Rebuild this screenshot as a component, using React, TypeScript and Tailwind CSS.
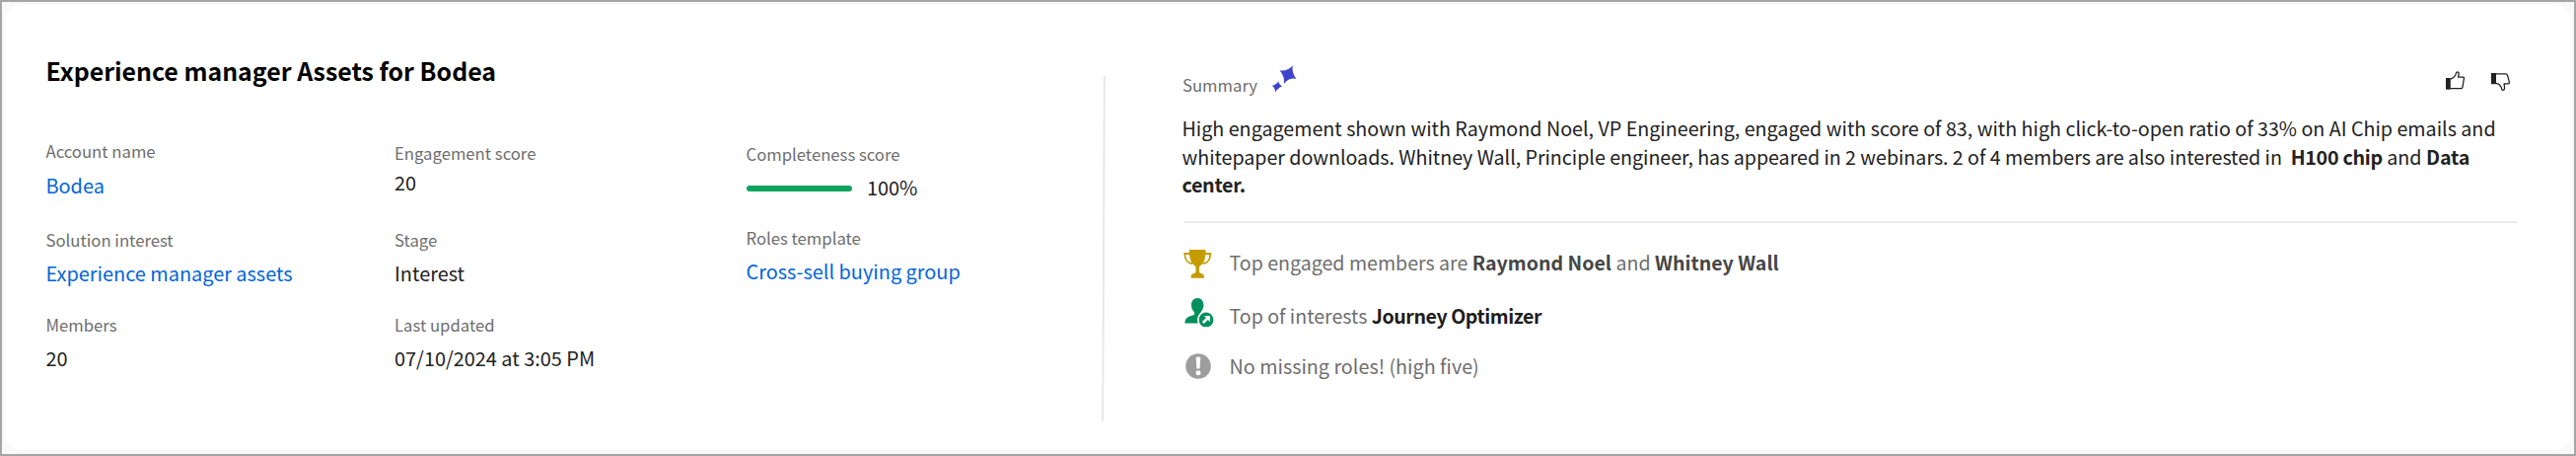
import type { ReactNode } from "react";

type FieldProps = {
  label: string;
  className?: string;
  gap?: string;
  link?: boolean;
  children: ReactNode;
};

function Field({ label, className = "", gap = "mt-3", link = false, children }: FieldProps) {
  return (
    <div className={`flex flex-col ${className}`}>
      <dt className="text-[16.7px] leading-5 text-[#6e6e6e]">{label}</dt>
      <dd className={`text-[19.9px] leading-6 ${gap} ${link ? "text-[#0265dc]" : "text-[#222222]"}`}>
        {children}
      </dd>
    </div>
  );
}

function SparkleIcon() {
  return (
    <svg width="28" height="30" viewBox="0 0 28 30" fill="#3e44cc" aria-hidden="true">
      <path d="M22.8 1.5Q21.4 8.4 26.5 14.9Q19 13.4 13.9 19.9Q15 12.4 9.5 6.2Q17 7.6 22.8 1.5Z" />
      <path d="M8.5 17.2Q8.3 20.2 12.1 22.5Q8.1 23.8 5 28.5Q5.3 24.6 1.9 21.7Q5.7 21.1 8.5 17.2Z" />
    </svg>
  );
}

function ThumbUpIcon() {
  return (
    <svg width="20" height="20" viewBox="0 0 20 20" fill="none" aria-hidden="true">
      <path d="M0 7H4.8V18.7H0Z" fill="#222222" />
      <path
        d="M4.8 8.2C7 7.4 9 5.6 9.8 4C10.3 2.9 10.3 .9 11.6 .8C13 .8 13.3 1.9 13.2 3.1L12.5 6.1H17.4Q18.7 6.2 18.4 7.5L17 16.2Q16.6 17.6 15.3 17.6H4.8"
        stroke="#222222"
        strokeWidth="1.3"
        strokeLinejoin="round"
      />
    </svg>
  );
}

function ThumbDownIcon() {
  return (
    <svg width="20" height="20" viewBox="0 0 20 20" fill="none" aria-hidden="true">
      <path d="M0 0H5V11.2H0Z" fill="#222222" />
      <path
        d="M5 .8H14.6Q16 .8 16.5 2.2L18.4 9.4Q18.6 10.8 17.4 10.9H13.1L13.5 14.3C13.7 16 13.2 17.4 11.9 17.4C10.4 17.3 10.7 15.5 10 14C9.1 12.2 7.4 10.6 5 10.3"
        stroke="#222222"
        strokeWidth="1.3"
        strokeLinejoin="round"
      />
    </svg>
  );
}

function TrophyIcon() {
  return (
    <svg width="29" height="29" viewBox="0 0 29 29" aria-hidden="true">
      <path
        d="M6.6 4H1.3C1.3 9.5 4.2 13.7 9 14.2M22 4H27.3C27.3 9.5 24.4 13.7 19.6 14.2"
        fill="none"
        stroke="#c49c00"
        strokeWidth="1.8"
      />
      <path
        d="M5.9 0H22.6C22.7 7.5 21.4 12.7 18.2 15.3C16.8 16.4 16 17 16 18V22.6C16 24 20.9 24.2 20.9 27V28.7H7.6V27C7.6 24.2 12.5 24 12.5 22.6V18C12.5 17 11.7 16.4 10.3 15.3C7.1 12.7 5.8 7.5 5.9 0Z"
        fill="#c49c00"
      />
    </svg>
  );
}

function UserShareIcon() {
  return (
    <svg width="30" height="30" viewBox="0 0 30 30" aria-hidden="true">
      <path
        d="M13.2 0C17 0 19.4 2.9 19.4 7C19.4 10 18.3 12.3 16.7 14C16 14.8 16 16.6 17 17.1L24 19.5V25.6H.5C.4 20.6 2.8 19 9 17.3C10.4 16.9 10.5 14.8 9.7 14C8.1 12.3 7 10 7 7C7 2.9 9.4 0 13.2 0Z"
        fill="#008f5d"
      />
      <circle cx="22" cy="21.9" r="9" fill="#ffffff" />
      <circle cx="22" cy="21.9" r="7.4" fill="#008f5d" />
      <path d="M20 18H26V24L23.8 21.9L19.8 26L17.9 24.1L22 20.1Z" fill="#ffffff" />
    </svg>
  );
}

function AlertIcon() {
  return (
    <svg width="26" height="26" viewBox="0 0 26 26" aria-hidden="true">
      <circle cx="13" cy="13" r="12.8" fill="#9d9d9d" />
      <path d="M10.7 4Q13 3.2 15.3 4L14.6 15.2Q13 15.8 11.4 15.2Z" fill="#ffffff" />
      <circle cx="13" cy="19.8" r="2.5" fill="#ffffff" />
    </svg>
  );
}

export default function App() {
  return (
    <div className="box-border flex h-[462px] w-full border-2 border-[#a5a5a5] bg-[#f8f8f8] px-[3px] pt-[3px] pb-1 font-['Noto_Sans_CJK_SC','Noto_Sans',sans-serif] whitespace-nowrap">
      <main className="flex flex-1 rounded-[16px] bg-white">
        <section className="w-[1113px] pt-[51px] pl-[41.5px]">
          <h1 className="text-[24.9px] leading-[30px] font-bold text-black">
            Experience manager Assets for Bodea
          </h1>
          <dl className="mt-[57px] flex items-start">
            <div className="w-[353.5px]">
              <Field label="Account name" gap="mt-[13px]" link>Bodea</Field>
              <Field label="Solution interest" className="mt-[33px]" link>Experience manager assets</Field>
              <Field label="Members" className="mt-[30px]">20</Field>
            </div>
            <div className="w-[356.5px] pt-0.5">
              <Field label="Engagement score" gap="mt-2">20</Field>
              <Field label="Stage" className="mt-9">Interest</Field>
              <Field label="Last updated" className="mt-[30px]">07/10/2024 at 3:05 PM</Field>
            </div>
            <div className="pt-[3px]">
              <Field label="Completeness score">
                <span className="flex items-center">
                  <span className="mt-0.5 ml-[0.5px] h-1.5 w-[107px] rounded-full bg-[#0fa560]" />
                  <span className="ml-[15px]">100%</span>
                </span>
              </Field>
              <Field label="Roles template" className="mt-[29px]" link>Cross-sell buying group</Field>
            </div>
          </dl>
        </section>

        <div className="mt-[72px] h-[350px] w-0.5 rotate-[0.28deg] bg-[#e8e8e8]" />

        <section className="ml-[78px] flex w-[1354px] flex-col">
          <header className="mt-[60px] flex h-[31px] items-start">
            <h2 className="mt-[11px] ml-px text-[16.7px] leading-5 text-[#6e6e6e]">Summary</h2>
            <span className="ml-[13px]"><SparkleIcon /></span>
            <button className="mt-[7px] ml-auto" aria-label="Helpful"><ThumbUpIcon /></button>
            <button className="mt-[9px] mr-1.5 ml-[26px]" aria-label="Not helpful"><ThumbDownIcon /></button>
          </header>
          <p className="mt-5 ml-[0.5px] text-[19.7px] leading-[28.6px] text-[#222222]">
            High engagement shown with Raymond Noel, VP Engineering, engaged with score of 83, with high click-to-open ratio of 33% on AI Chip emails and
            <br />
            <span className="tracking-[-0.045px]">
              whitepaper downloads. Whitney Wall, Principle engineer, has appeared in 2 webinars. 2 of 4 members are also interested in{"\u00a0 "}
            </span>
            <b className="tracking-[-0.3px]">H100 chip</b> and <b className="tracking-[-0.1px]">Data</b>
            <br />
            <b className="tracking-[-0.3px]">center.</b>
          </p>
          <hr className="mt-[22px] ml-0.5 w-[1352px] border-t-2 border-[#eaeaea]" />
          <ul className="ml-0.5 text-[19.6px] leading-6 text-[#6e6e6e]">
            <li className="mt-[27px] flex h-[30px] items-start">
              <span className="w-[46.5px]"><TrophyIcon /></span>
              <span className="mt-px">
                Top engaged members are <b className="text-[#464646]">Raymond Noel</b> and{" "}
                <b className="text-[#464646]">Whitney Wall</b>
              </span>
            </li>
            <li className="mt-[19px] flex h-[30px] items-start">
              <span className="w-[46.5px] pl-px"><UserShareIcon /></span>
              <span className="mt-1.5">
                Top of interests <b className="tracking-[-0.45px] text-[#1d1d1d]">Journey Optimizer</b>
              </span>
            </li>
            <li className="mt-[26px] flex h-[30px] items-start">
              <span className="w-[46.5px] pl-[1.5px]"><AlertIcon /></span>
              <span className="mt-px text-[19.75px]">No missing roles! (high five)</span>
            </li>
          </ul>
        </section>
      </main>
    </div>
  );
}
